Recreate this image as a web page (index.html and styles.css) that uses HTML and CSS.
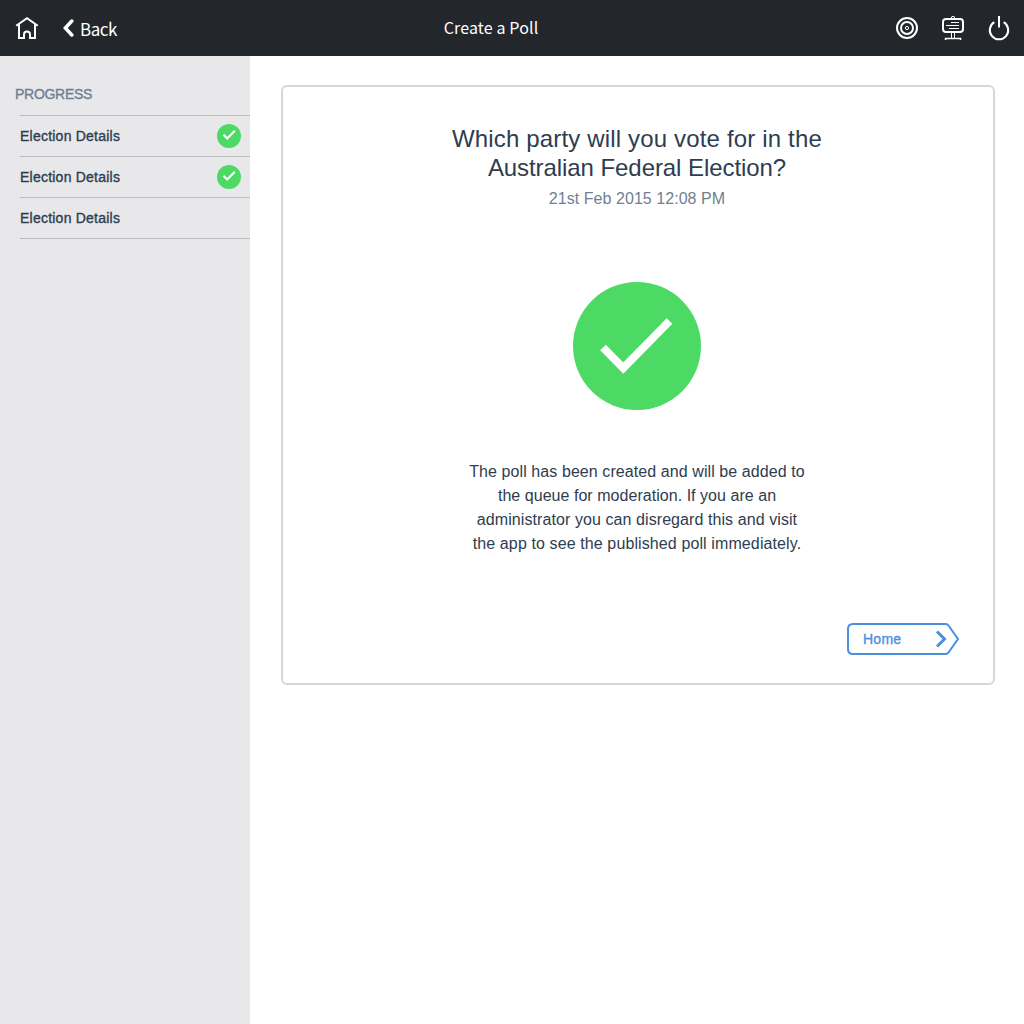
FILE: index.html
```html
<!DOCTYPE html>
<html lang="en">
<head>
<meta charset="utf-8">
<title>Create a Poll</title>
<link rel="stylesheet" href="styles.css">
</head>
<body>
<header class="topbar">
  <nav class="nav">
    <svg class="home-icon" width="24" height="24" viewBox="0 0 24 24"><path d="M1.200 9.700 12 2.200l10.800 7.500M4 8.500V22h5v-3.500a3 3 0 0 1 6 0V22h5V8.500"/></svg>
    <a class="back"><svg width="12" height="18" viewBox="0 0 12 18"><path d="M8.800 2 2.300 9l6.500 7"/></svg><span class="back-text">Back</span></a>
  </nav>
  <h1 class="title"><span class="title-text">Create a Poll</span></h1>
  <div class="actions">
    <svg width="24" height="24" viewBox="0 0 24 24"><circle cx="12" cy="12" r="10"/><circle cx="12" cy="12" r="6"/><circle class="thin" cx="12" cy="12" r="1.600"/></svg>
    <svg width="24" height="26" viewBox="0 0 24 26"><rect x="2" y="4" width="20" height="13" rx="3"/><path class="thin" d="M10.300 3a1.700 1.700 0 0 1 3.400 0M10 7.500h8M5 10.500h13M8 13.500h10M10.500 18v5M13.500 18v5"/><path class="base" d="M4.500 25v-1.500h15V25"/></svg>
    <svg width="24" height="26" viewBox="0 0 24 26"><path d="M7.300 7.200a9.200 9.200 0 1 0 9.400 0M12 1v11.500"/></svg>
  </div>
</header>
<div class="body">
  <aside class="sidebar">
    <h2 class="side-title"><span class="side-title-text">PROGRESS</span></h2>
    <ul class="steps">
      <li class="step"><span class="step-text">Election Details</span><svg class="done" width="24" height="24" viewBox="0 0 24 24"><circle cx="12" cy="12" r="12"/><path d="m6.500 10.800 3.700 3.700 7.600-7.700"/></svg></li>
      <li class="step"><span class="step-text">Election Details</span><svg class="done" width="24" height="24" viewBox="0 0 24 24"><circle cx="12" cy="12" r="12"/><path d="m6.500 10.800 3.700 3.700 7.600-7.700"/></svg></li>
      <li class="step"><span class="step-text">Election Details</span></li>
    </ul>
  </aside>
  <main class="main">
    <section class="card">
      <h2 class="question"><span class="q1">Which party will you vote for in the</span><br><span class="q2">Australian Federal Election?</span></h2>
      <p class="date"><span class="date-text">21st Feb 2015 12:08 PM</span></p>
      <svg class="success" width="128" height="128" viewBox="0 0 128 128"><circle cx="64" cy="64" r="64"/><path d="m30 65.500 20.300 20.500L96.500 39"/></svg>
      <p class="message"><span class="m1">The poll has been created and will be added to</span><br><span class="m2">the queue for moderation. If you are an</span><br><span class="m3">administrator you can disregard this and visit</span><br><span class="m4">the app to see the published poll immediately.</span></p>
      <a class="home-button">
        <svg class="outline" width="114" height="32" viewBox="0 0 114 32"><path d="M6 1h92.500q2 0 3 1.500L111 16l-9.500 13.500q-1 1.500-3 1.500H6q-5 0-5-5V6q0-5 5-5z"/><path class="arrow" d="m90 8.500 7.500 7.500-7.500 7.500"/></svg>
        <span class="home-text">Home</span>
      </a>
    </section>
  </main>
</div>
</body>
</html>
```
FILE: styles.css
```css
* { box-sizing: border-box; }
body {
  margin: 0;
  min-height: 100vh;
  display: flex;
  flex-direction: column;
  background: #fff;
  color: #2e3d4f;
  font-family: "Liberation Sans", Arial, sans-serif;
}
h1, h2, p, ul { margin: 0; padding: 0; font-weight: 400; }
svg { display: block; fill: none; flex: none; }
.topbar {
  height: 56px;
  display: grid;
  grid-template-columns: 250px 482px 1fr;
  align-items: center;
  background: #23272c;
  color: #fff;
  font-family: "Noto Sans CJK SC", sans-serif;
}
.topbar svg { stroke: #fff; stroke-width: 2; }
.topbar .thin { stroke-width: 1; }
.topbar .base { stroke-width: 1.500; }
.nav { display: flex; align-items: center; padding-left: 15px; gap: 24px; }
.back { display: flex; align-items: center; gap: 5px; font-size: 17px; line-height: 24px; letter-spacing: -.5px; }
.back svg { stroke-width: 3.500; stroke-linecap: round; }
.back-text { padding-top: 1px; }
.title { padding-bottom: 2px; text-align: center; font-size: 16px; line-height: 24px; letter-spacing: .14px; }
.actions { display: flex; align-items: center; justify-content: flex-end; gap: 22px; padding-right: 13px; }
.body { flex: 1; display: flex; }
.sidebar { width: 250px; background: #e8e8ea; padding-top: 28px; }
.side-title { height: 31px; padding-left: 15px; font-size: 14px; line-height: 20px; letter-spacing: -.28px; color: #6f8093; -webkit-text-stroke: .35px; }
.steps { list-style: none; margin-left: 20px; border-top: 1px solid #bcbdc0; }
.step {
  height: 41px;
  display: flex;
  align-items: center;
  justify-content: space-between;
  padding-right: 9px;
  border-bottom: 1px solid #bcbdc0;
  font-size: 14px;
  line-height: 20px;
  letter-spacing: .23px;
  -webkit-text-stroke: .35px;
}
.done circle, .success circle { fill: #4cd964; }
.done path { stroke: #fff; stroke-width: 2.200; }
.success path { stroke: #fff; stroke-width: 8; }
.main { flex: 1; padding: 29px 29px 0 31px; }
.card {
  height: 600px;
  display: flex;
  flex-direction: column;
  align-items: center;
  padding: 37px 32px 0 30px;
  border: 2px solid #d6d7d9;
  border-radius: 6px;
  text-align: center;
  white-space: nowrap;
}
.question { font-size: 24px; line-height: 29px; }
.q1 { letter-spacing: .16px; }
.q2 { letter-spacing: -.07px; }
.date { margin-top: 7px; font-size: 16px; line-height: 20px; letter-spacing: .05px; color: #6f8093; }
.success { margin-top: 73px; }
.message { margin-top: 50px; font-size: 16px; line-height: 24px; letter-spacing: .08px; }
.m2 { letter-spacing: .04px; }
.m4 { letter-spacing: .11px; }
.home-button {
  display: grid;
  align-items: center;
  align-self: flex-end;
  margin-top: 67px;
  color: #4a90e2;
  font-size: 14px;
  line-height: 20px;
  letter-spacing: .25px;
  text-align: left;
  -webkit-text-stroke: .35px;
}
.home-button > * { grid-area: 1 / 1; }
.home-text { padding-left: 16px; }
.outline { stroke: #4a90e2; stroke-width: 2; }
.outline .arrow { stroke-width: 3; }
```
